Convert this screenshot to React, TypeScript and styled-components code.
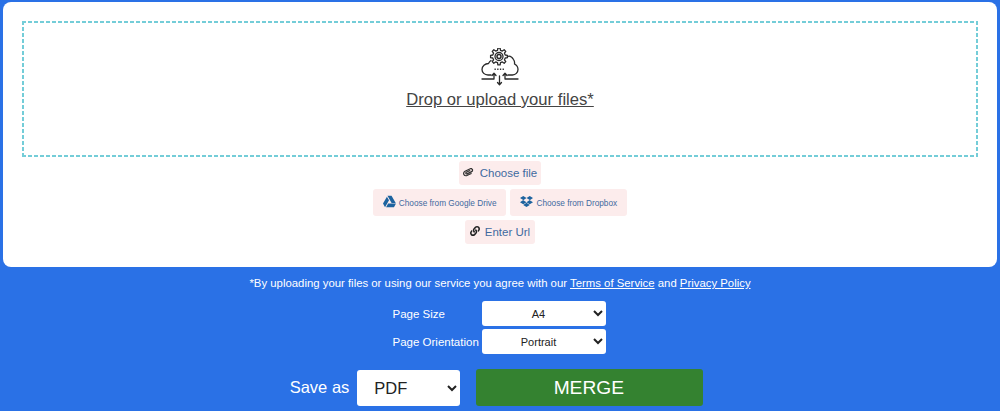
import React from "react";
import styled, { createGlobalStyle } from "styled-components";
import { FaDropbox, FaGoogleDrive, FaLink, FaPaperclip } from "react-icons/fa";

const Global = createGlobalStyle`
  html, body { margin: 0; padding: 0; height: 411px; overflow: hidden; background: #2a71e6; }
  body { font-family: "Liberation Sans", Arial, sans-serif; }
`;

const Page = styled.div`
  display: flex;
  flex-direction: column;
  align-items: center;
  height: 411px;
  padding-top: 2px;
  box-sizing: border-box;
`;

const Card = styled.section`
  width: 994px;
  height: 265px;
  box-sizing: border-box;
  background: #fff;
  border-radius: 8px;
  padding: 19px 19px 0;
  display: flex;
  flex-direction: column;
  align-items: center;
`;

const DropZone = styled.div`
  width: 956px;
  height: 136px;
  box-sizing: border-box;
  --dash: repeating-linear-gradient(90deg, #74cdd8 0 4px, transparent 4px 6px);
  --dash-v: repeating-linear-gradient(180deg, #74cdd8 0 4px, transparent 4px 6px);
  background-image: var(--dash), var(--dash), var(--dash-v), var(--dash-v);
  background-size: 100% 2px, 100% 2px, 2px 100%, 2px 100%;
  background-position: 0 0, 0 100%, 0 0, 100% 0;
  background-repeat: no-repeat;
  display: flex;
  flex-direction: column;
  align-items: center;
  padding-top: 27px;
  color: #444;
`;

const DropLabel = styled.a`
  font-size: 16.64px;
  line-height: 20px;
  margin-top: 4px;
  text-decoration: underline;
  color: #444;
`;

const ButtonRows = styled.div`
  display: flex;
  flex-direction: column;
  align-items: center;
  margin-top: 4px;
  gap: 4px;
`;

const Row = styled.div`
  display: flex;
  gap: 4px;
`;

const PickButton = styled.button<{ $small?: boolean; $gap: number; $pad: number }>`
  display: flex;
  align-items: center;
  justify-content: center;
  gap: ${(p) => p.$gap}px;
  height: ${(p) => (p.$small ? "27px" : "24px")};
  padding: ${(p) => (p.$small ? "1px" : "0")} ${(p) => p.$pad}px 0;
  border: 0;
  border-radius: 3px;
  background: #fcecec;
  color: #3f6a9f;
  font-family: inherit;
  font-size: ${(p) => (p.$small ? "8.25px" : "11.5px")};
`;

const IconWrap = styled.span<{ $color?: string; $size: number; $rotate?: number; $lift: number }>`
  display: inline-flex;
  margin-top: -${(p) => p.$lift}px;
  color: ${(p) => p.$color ?? "#333"};
  font-size: ${(p) => p.$size}px;
  transform: rotate(${(p) => p.$rotate ?? 0}deg);
`;

const Notice = styled.p`
  margin: 9px 0 0;
  font-size: 11.36px;
  line-height: 14px;
  color: #fff;
  white-space: nowrap;
  a { color: #fff; text-decoration: underline; }
`;

const Options = styled.div`
  display: grid;
  grid-template-columns: 89px 124px;
  row-gap: 3px;
  margin-top: 11px;
  margin-left: -2px;
`;

const OptionLabel = styled.label`
  font-size: 11.5px;
  line-height: 25px;
  padding-top: 1px;
  height: 25px;
  box-sizing: border-box;
  color: #fff;
  white-space: nowrap;
`;

const Select = styled.select<{ $large?: boolean }>`
  width: ${(p) => (p.$large ? "103px" : "124px")};
  height: ${(p) => (p.$large ? "36px" : "25px")};
  box-sizing: border-box;
  border: 0;
  border-radius: 3px;
  background-color: #fff;
  color: #222;
  font-family: inherit;
  font-size: ${(p) => (p.$large ? "16.5px" : "11px")};
  text-align-last: ${(p) => (p.$large ? "left" : "center")};
  padding-left: ${(p) => (p.$large ? "13px" : "2px")};
`;

const SaveRow = styled.div`
  display: flex;
  align-items: center;
  margin-top: 15px;
  margin-left: -7px;
`;

const SaveLabel = styled.span`
  font-size: 16.5px;
  color: #fff;
  margin-right: 8px;
`;

const MergeButton = styled.button`
  width: 227px;
  height: 37px;
  margin-left: 16px;
  padding: 0 2px 0 0;
  border: 0;
  border-radius: 3px;
  background: #348230;
  color: #fff;
  font-family: inherit;
  font-size: 19.2px;
`;

const gearPath = (cx: number, cy: number, teeth: number, rOut: number, rIn: number) => {
  const pts: string[] = [];
  const step = (Math.PI * 2) / teeth;
  for (let i = 0; i < teeth; i++) {
    const a = i * step - Math.PI / 2;
    const corners: [number, number][] = [
      [rIn, a - step * 0.3],
      [rOut, a - step * 0.17],
      [rOut, a + step * 0.17],
      [rIn, a + step * 0.3],
    ];
    for (const [r, t] of corners) {
      pts.push(`${(cx + r * Math.cos(t)).toFixed(2)} ${(cy + r * Math.sin(t)).toFixed(2)}`);
    }
  }
  return `M${pts.join("L")}Z`;
};

const CloudIcon = () => (
  <svg width="38" height="38" viewBox="0 0 38 38" fill="none" stroke="#2a2a2a" strokeWidth="1.3" strokeLinecap="round" strokeLinejoin="round">
    <path d="M10 27H7C3.5 27 1 24.5 1 21.5C1 18 4 15.5 7.5 15.5C8 14.5 9 13 10 12.5" />
    <path d="M26.5 8.5C28.5 7.5 31 9 32.5 11.5C33.5 13 33.8 14.5 33.5 16C35.5 17 37 19 37 21.5C37 24.5 34.5 27 31.5 27H27" />
    <path d="M13.5 21.3H23" strokeDasharray="1.3 1.4" strokeWidth="1.5" strokeLinecap="butt" />
    <path d={gearPath(18, 8.5, 8, 8.5, 6.4)} />
    <circle cx="18" cy="8.5" r="4" />
    <circle cx="18" cy="8.5" r="2" strokeWidth="1.5" />
    <path d="M1 31H13V25.5M11 27.5L13 25.2L15 27.5" />
    <path d="M37 31H24V25.5M22 27.5L24 25.2L26 27.5" />
    <path d="M18.5 28V36.5M16.5 34.5L18.5 36.8L20.5 34.5" />
  </svg>
);

export default function App() {
  return (
    <Page>
      <Global />
      <Card>
        <DropZone>
          <CloudIcon />
          <DropLabel>Drop or upload your files*</DropLabel>
        </DropZone>
        <ButtonRows>
          <PickButton $gap={7} $pad={4}>
            <IconWrap $size={10} $rotate={20} $lift={3}><FaPaperclip /></IconWrap>
            Choose file
          </PickButton>
          <Row>
            <PickButton $small $gap={3} $pad={10}>
              <IconWrap $size={13} $color="#1d639f" $lift={4}><FaGoogleDrive /></IconWrap>
              Choose from Google Drive
            </PickButton>
            <PickButton $small $gap={3} $pad={10}>
              <IconWrap $size={13} $color="#1d639f" $lift={4}><FaDropbox /></IconWrap>
              Choose from Dropbox
            </PickButton>
          </Row>
          <PickButton $gap={5} $pad={5}>
            <IconWrap $size={10} $color="#222" $lift={3}><FaLink /></IconWrap>
            Enter Url
          </PickButton>
        </ButtonRows>
      </Card>
      <Notice>
        *By uploading your files or using our service you agree with our <a>Terms of Service</a> and <a>Privacy Policy</a>
      </Notice>
      <Options>
        <OptionLabel>Page Size</OptionLabel>
        <Select defaultValue="A4"><option>A4</option><option>Letter</option></Select>
        <OptionLabel>Page Orientation</OptionLabel>
        <Select defaultValue="Portrait"><option>Portrait</option><option>Landscape</option></Select>
      </Options>
      <SaveRow>
        <SaveLabel>Save as</SaveLabel>
        <Select $large defaultValue="PDF"><option>PDF</option><option>DOCX</option></Select>
        <MergeButton>MERGE</MergeButton>
      </SaveRow>
    </Page>
  );
}
